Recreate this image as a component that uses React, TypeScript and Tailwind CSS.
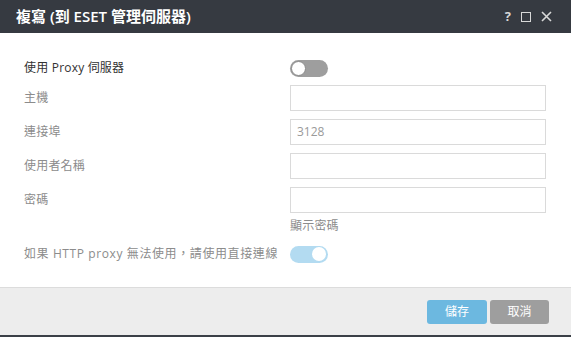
import React from "react";

const font = { fontFamily: '"Open Sans", "Noto Sans CJK TC", sans-serif' };

function Toggle({ on }: { on: boolean }) {
  return on ? (
    <div className="w-[38px] h-[17px] rounded-full bg-[#b3dbf1] flex items-center justify-end pr-[2px]">
      <div className="w-[14px] h-[14px] rounded-full bg-white" />
    </div>
  ) : (
    <div className="w-[38px] h-[17px] rounded-full bg-[#9e9e9e] flex items-center pl-[1px]">
      <div className="w-[15px] h-[15px] rounded-full bg-white border border-[#8a8a8a]" />
    </div>
  );
}

function Field({ value }: { value?: string }) {
  return (
    <div className="w-[256px] h-[26px] border border-[#dadada] bg-white flex items-center pl-[6px] text-[12px] text-[#9a9a9a]">
      {value}
    </div>
  );
}

function Row({ label, dark, wide, children }: { label: string; dark?: boolean; wide?: boolean; children: React.ReactNode }) {
  return (
    <div className="flex items-center h-[26px]">
      <div
        className={`w-[266px] text-[12px] whitespace-nowrap ${dark ? "text-[#333333]" : "text-[#8c8c8c]"} ${
          wide ? "tracking-[0.6px]" : "tracking-[0.2px]"
        }`}
      >
        {label}
      </div>
      {children}
    </div>
  );
}

export default function App() {
  return (
    <div className="w-[571px] h-[337px] bg-[#3b4047]" style={font}>
      <div className="h-[335px] flex flex-col bg-white">
        <div className="h-[33px] bg-[#363a41] flex items-center pl-[16px] pr-[19px]">
          <div className="text-white text-[15px] font-semibold flex-1">複寫 (到 ESET 管理伺服器)</div>
          <div className="flex items-center gap-[10px] text-[#d8d8d8]">
            <span className="text-[13px] font-bold leading-none">?</span>
            <div className="w-[10px] h-[10px] border-[1.5px] border-[#d8d8d8]" />
            <svg width="11" height="11" viewBox="0 0 11 11">
              <path d="M1 1 L10 10 M10 1 L1 10" stroke="#d8d8d8" strokeWidth="1.6" />
            </svg>
          </div>
        </div>
        <div className="flex-1 flex flex-col pl-[24px] pt-[22px]">
          <Row label="使用 Proxy 伺服器" dark>
            <Toggle on={false} />
          </Row>
          <div className="mt-[4px]">
            <Row label="主機">
              <Field />
            </Row>
          </div>
          <div className="mt-[8px]">
            <Row label="連接埠">
              <Field value="3128" />
            </Row>
          </div>
          <div className="mt-[8px]">
            <Row label="使用者名稱">
              <Field />
            </Row>
          </div>
          <div className="mt-[8px]">
            <Row label="密碼">
              <Field />
            </Row>
          </div>
          <div className="mt-[6px] pl-[266px] text-[12px] leading-[14px] text-[#8c8c8c] tracking-[0.2px]">顯示密碼</div>
          <div className="mt-[8px]">
            <Row label="如果 HTTP proxy 無法使用，請使用直接連線" wide>
              <Toggle on />
            </Row>
          </div>
        </div>
        <div className="h-[48px] border-t border-[#dcdcdc] bg-[#ededed] flex justify-end items-start pt-[12px] pr-[22px] gap-[3px]">
          <button className="w-[60px] h-[24px] rounded-[3px] bg-[#6cb8e0] text-white text-[12px]">儲存</button>
          <button className="w-[59px] h-[24px] rounded-[3px] bg-[#9e9e9e] text-white text-[12px]">取消</button>
        </div>
      </div>
    </div>
  );
}
